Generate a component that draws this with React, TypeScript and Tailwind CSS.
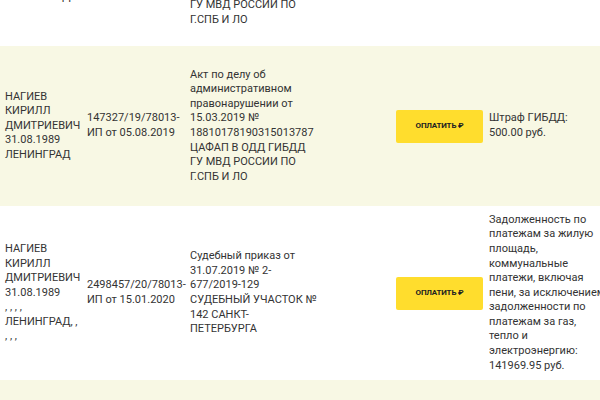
const row2 = {
  person: ['НАГИЕВ', 'КИРИЛЛ', 'ДМИТРИЕВИЧ', '31.08.1989', 'ЛЕНИНГРАД'],
  proc: ['147327/19/78013-', 'ИП от 05.08.2019'],
  doc: [
    'Акт по делу об',
    'административном',
    'правонарушении от',
    '15.03.2019 №',
    '18810178190315013787',
    'ЦАФАП В ОДД ГИБДД',
    'ГУ МВД РОССИИ ПО',
    'Г.СПБ И ЛО',
  ],
  subject: ['Штраф ГИБДД:', '500.00 руб.'],
};

const row3 = {
  person: ['НАГИЕВ', 'КИРИЛЛ', 'ДМИТРИЕВИЧ', '31.08.1989', ', , , ,', 'ЛЕНИНГРАД, ,', ', , ,'],
  proc: ['2498457/20/78013-', 'ИП от 15.01.2020'],
  doc: [
    'Судебный приказ от',
    '31.07.2019 № 2-',
    '677/2019-129',
    'СУДЕБНЫЙ УЧАСТОК №',
    '142 САНКТ-',
    'ПЕТЕРБУРГА',
  ],
  subject: [
    'Задолженность по',
    'платежам за жилую',
    'площадь,',
    'коммунальные',
    'платежи, включая',
    'пени, за исключением',
    'задолженности по',
    'платежам за газ,',
    'тепло и',
    'электроэнергию:',
    '141969.95 руб.',
  ],
};

function Lines({ items }: { items: string[] }) {
  return (
    <div>
      {items.map((t, i) => (
        <div key={i} className="whitespace-nowrap">
          {t}
        </div>
      ))}
    </div>
  );
}

function PayButton() {
  return (
    <button className="w-[87px] h-[33px] rounded-[2px] bg-[#ffdd2d] text-[8px] font-bold text-[#222] tracking-tight uppercase">
      Оплатить ₽
    </button>
  );
}

type Row = typeof row2;

function DebtRow({ row, bg, height }: { row: Row; bg: string; height: string }) {
  return (
    <div className={`flex items-center ${bg} ${height}`}>
      <div className="w-[87px] pl-[5px] shrink-0">
        <Lines items={row.person} />
      </div>
      <div className="w-[103px] shrink-0">
        <Lines items={row.proc} />
      </div>
      <div className="w-[206px] shrink-0">
        <Lines items={row.doc} />
      </div>
      <div className="w-[93px] shrink-0 flex">
        <PayButton />
      </div>
      <div className="flex-1">
        <Lines items={row.subject} />
      </div>
    </div>
  );
}

export default function App() {
  return (
    <div
      className="w-[600px] h-[400px] overflow-hidden bg-white text-[11px] leading-[14.6px] text-[#333]"
      style={{ fontFamily: 'Roboto, "Noto Sans", sans-serif' }}
    >
      {/* tail of the previous row, cut by the top edge */}
      <div className="flex h-[46px] bg-white overflow-hidden">
        <div className="w-[190px] pl-[5px] shrink-0 -mt-[10px]">ЛЕНИНГРАД</div>
        <div className="-mt-[2px]">
          <Lines items={['ГУ МВД РОССИИ ПО', 'Г.СПБ И ЛО']} />
        </div>
      </div>
      <DebtRow row={row2} bg="bg-[#f8f8e4]" height="h-[160px]" />
      <DebtRow row={row3} bg="bg-white" height="h-[174px]" />
      <div className="h-[20px] bg-[#f8f8e4]" />
    </div>
  );
}
